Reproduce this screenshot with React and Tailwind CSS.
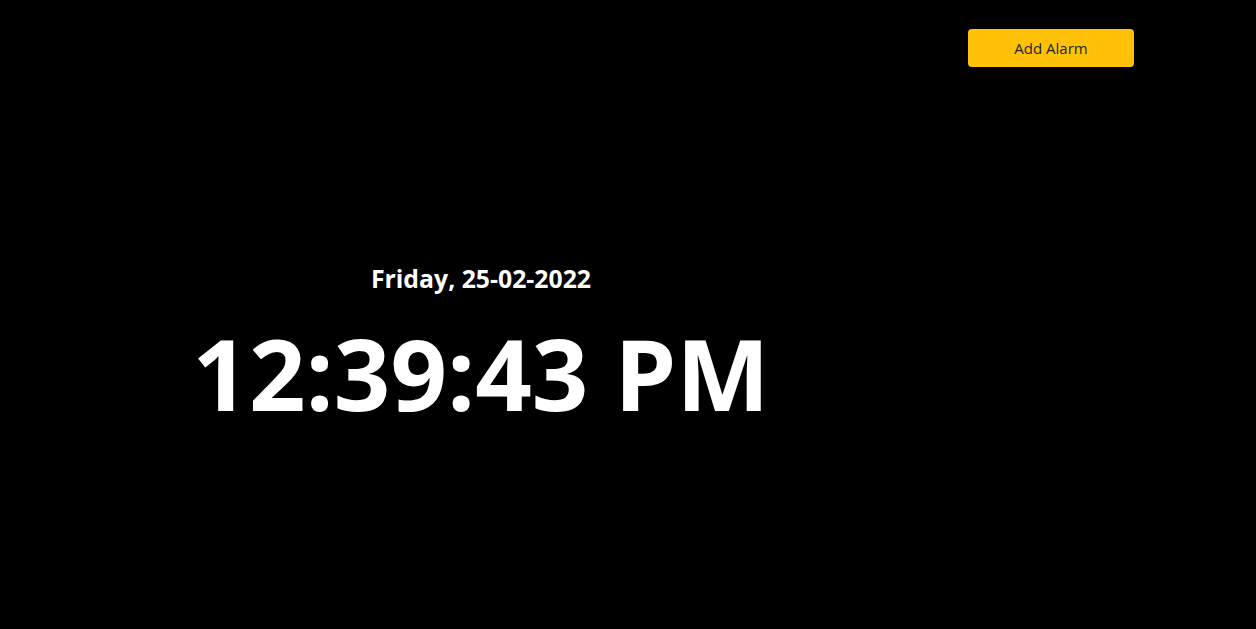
import React from 'react';

// 数字时钟页面
export default function App() {
  return (
    <div className="flex h-[629px] w-full bg-black" style={{ fontFamily: '"Open Sans", "Noto Sans", sans-serif' }}>
      {/* 时间区域 */}
      <div className="flex w-[962px] flex-col items-center pt-[266px] text-white">
        <h3 className="text-[24.8px] font-bold leading-none">Friday, 25-02-2022</h3>
        <h1 className="mt-[32px] text-[99px] font-bold leading-none">12:39:43 PM</h1>
      </div>

      {/* 闹钟按钮 */}
      <div className="pl-[6px] pt-[29px]">
        <button className="h-[38px] w-[166px] rounded-[4px] bg-[#ffc107] text-[15px] text-[#212529]">
          Add Alarm
        </button>
      </div>
    </div>
  );
}
